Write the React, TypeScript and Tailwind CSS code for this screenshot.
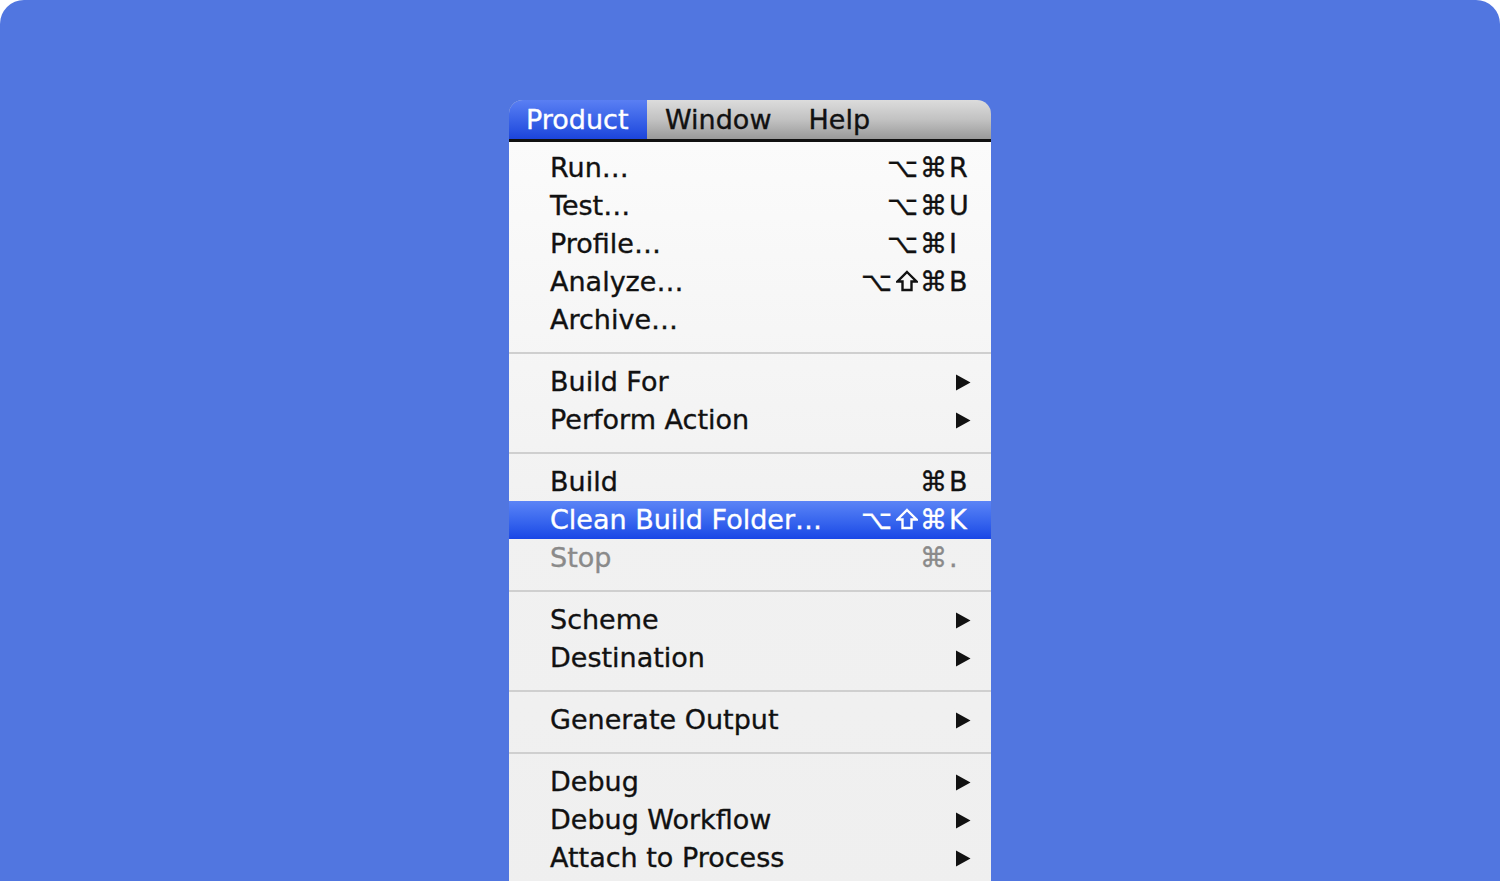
const Arrow = () => (
  <svg width="16" height="17" viewBox="0 0 16 17" className="block">
    <path d="M1 0.5 L15.5 8.5 L1 16.5 Z" fill="#111" />
  </svg>
);

const Shift = () => (
  <svg width="22" height="22" viewBox="0 0 22 22" className="inline-block mx-[2px] -mt-[2px]">
    <path
      d="M11 2 L20.5 11.5 L15.5 11.5 L15.5 20 L6.5 20 L6.5 11.5 L1.5 11.5 Z"
      fill="none"
      stroke="currentColor"
      strokeWidth="2.4"
      strokeLinejoin="miter"
    />
  </svg>
);

type Item = {
  label: string;
  mods?: string;
  keyChar?: string;
  sub?: boolean;
  active?: boolean;
  disabled?: boolean;
};

const groups: Item[][] = [
  [
    { label: "Run…", mods: "⌥⌘", keyChar: "R" },
    { label: "Test…", mods: "⌥⌘", keyChar: "U" },
    { label: "Profile…", mods: "⌥⌘", keyChar: "I" },
    { label: "Analyze…", mods: "⌥⇧⌘", keyChar: "B" },
    { label: "Archive…" },
  ],
  [
    { label: "Build For", sub: true },
    { label: "Perform Action", sub: true },
  ],
  [
    { label: "Build", mods: "⌘", keyChar: "B" },
    { label: "Clean Build Folder…", mods: "⌥⇧⌘", keyChar: "K", active: true },
    { label: "Stop", mods: "⌘", keyChar: ".", disabled: true },
  ],
  [
    { label: "Scheme", sub: true },
    { label: "Destination", sub: true },
  ],
  [{ label: "Generate Output", sub: true }],
  [
    { label: "Debug", sub: true },
    { label: "Debug Workflow", sub: true },
    { label: "Attach to Process", sub: true },
  ],
];

const Mods = ({ mods }: { mods: string }) => (
  <span className="flex items-center">
    {Array.from(mods).map((m, i) =>
      m === "⇧" ? <Shift key={i} /> : <span key={i} className="mr-[2px]">{m}</span>
    )}
  </span>
);

const MenuRow = ({ item }: { item: Item }) => {
  const color = item.active
    ? "text-white"
    : item.disabled
    ? "text-[#8a8a8a]"
    : "text-[#111]";
  return (
    <div
      className={`flex items-center h-[38px] pl-[41px] pr-[20px] ${color} ${
        item.active ? "bg-gradient-to-b from-[#5b84f6] to-[#1a46e6]" : ""
      }`}
    >
      <span className="flex-1 whitespace-nowrap">{item.label}</span>
      {item.keyChar && (
        <span className="flex items-center whitespace-nowrap pr-[2px]">
          <Mods mods={item.mods ?? ""} />
          <span className="w-[20px] text-left">{item.keyChar}</span>
        </span>
      )}
      {item.sub && <Arrow />}
    </div>
  );
};

export default function App() {
  return (
    <div className="w-[1500px] h-[881px] overflow-hidden bg-white">
      <div className="h-[1000px] bg-[#5176e0] rounded-[24px] flex justify-center pt-[100px]">
        <div
          className="w-[482px] text-[27px] leading-[38px] [-webkit-text-stroke-width:0.35px]"
          style={{ fontFamily: '"DejaVu Sans", "Lucida Grande", Verdana, sans-serif' }}
        >
          <div className="h-[42px] flex items-stretch rounded-t-[14px] overflow-hidden bg-gradient-to-b from-[#dcdcdc] via-[#c2c2c2] to-[#9a9a9a] border-b-[3px] border-[#111]">
            <div className="w-[138px] flex items-center pl-[17px] text-white bg-gradient-to-b from-[#5a7ff3] to-[#1c44dc]">
              Product
            </div>
            <div className="flex items-center pl-[18px] text-[#111]">Window</div>
            <div className="flex items-center pl-[37px] text-[#111]">Help</div>
          </div>
          <div className="bg-gradient-to-b from-[#fbfbfb] via-[#f1f1f1] to-[#efefef] pt-[7px] pb-[20px]">
            {groups.map((g, i) => (
              <div key={i}>
                {i > 0 && (
                  <div className="h-[24px] flex items-center">
                    <div className="w-full h-[2px] mt-[4px] bg-[#cfcfcf]" />
                  </div>
                )}
                {g.map((item) => (
                  <MenuRow key={item.label} item={item} />
                ))}
              </div>
            ))}
          </div>
        </div>
      </div>
    </div>
  );
}
